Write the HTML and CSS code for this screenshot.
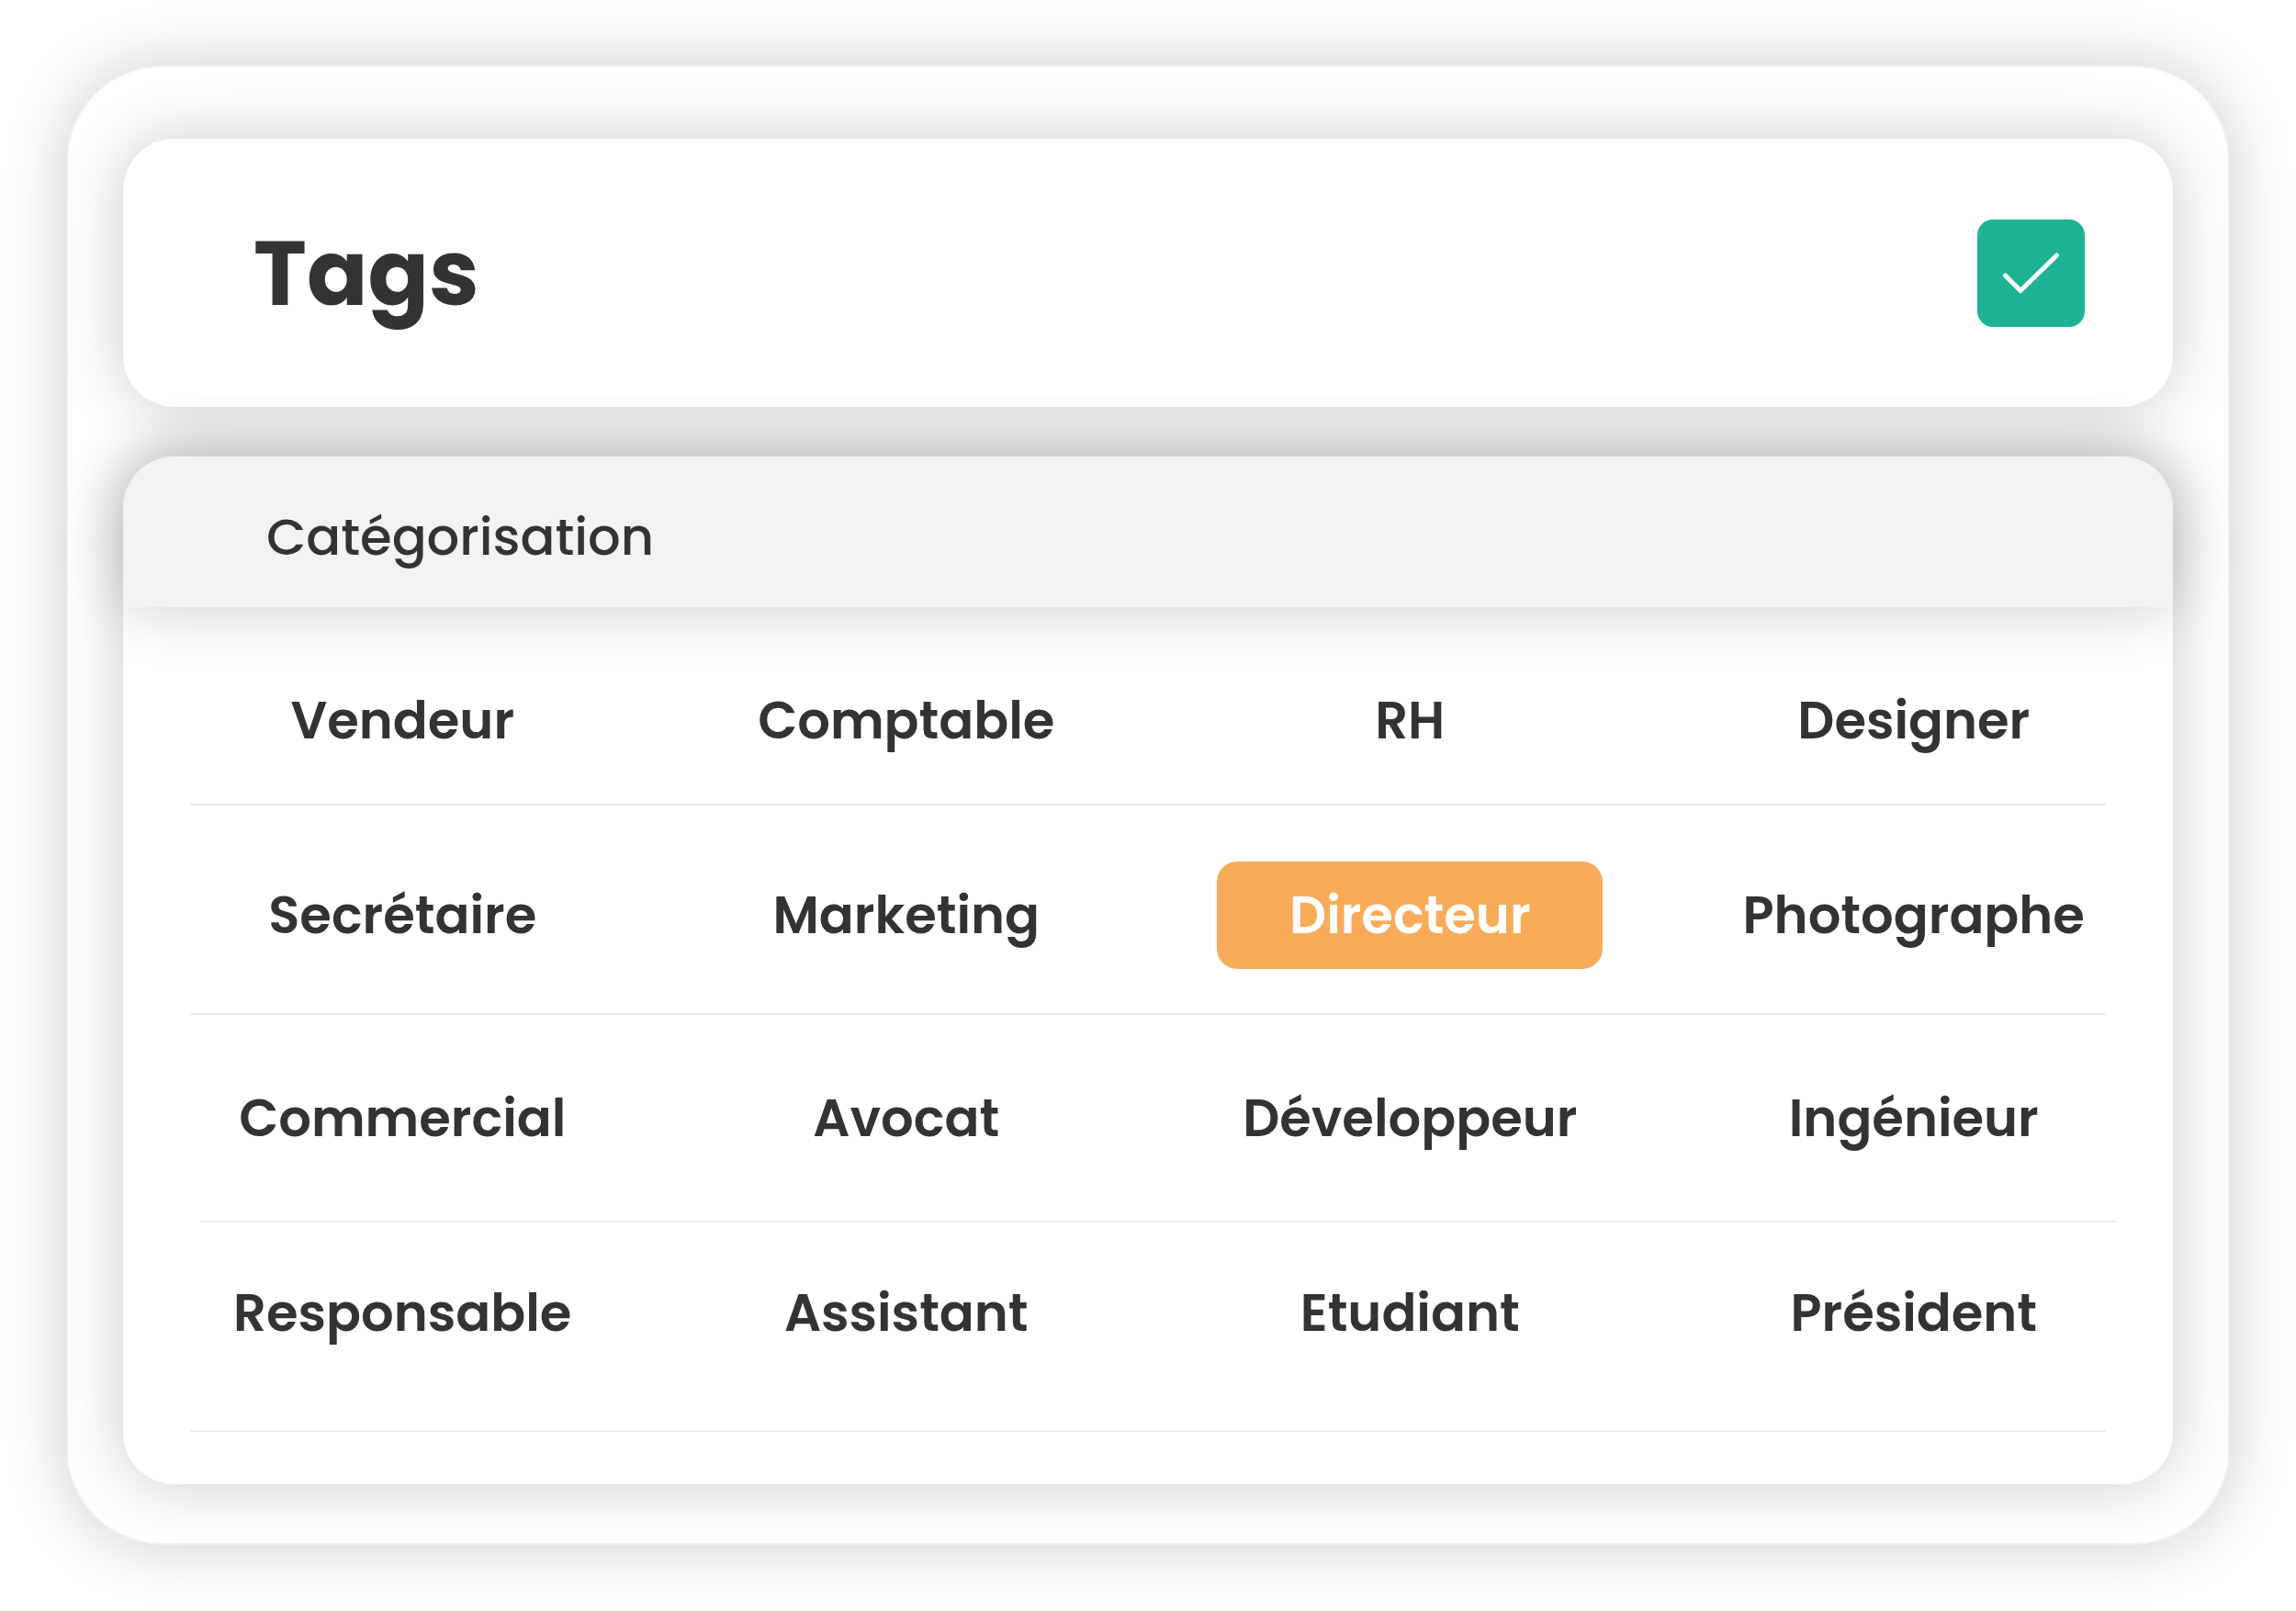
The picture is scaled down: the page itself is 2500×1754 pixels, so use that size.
FILE: index.html
```html
<!DOCTYPE html>
<html lang="fr">
<head>
    <meta charset="UTF-8">
    <title>Tags</title>
    <link rel="stylesheet" href="styles.css">
</head>
<body>

<main class="window">
    <header class="card">
        <h1>Tags</h1>
        <button class="confirm" type="button" aria-label="Valider">
            <svg viewBox="0 0 117 117" aria-hidden="true">
                <path d="M30.5 61L47 77.5L86.5 39"/>
            </svg>
        </button>
    </header>

    <section class="panel">
        <h2>Catégorisation</h2>

        <div class="tags">
            <div class="row row-first">
                <button type="button">Vendeur</button>
                <button type="button">Comptable</button>
                <button type="button">RH</button>
                <button type="button">Designer</button>
            </div>
            <hr>
            <div class="row row-second">
                <button type="button">Secrétaire</button>
                <button type="button">Marketing</button>
                <button type="button" class="selected" aria-pressed="true">Directeur</button>
                <button type="button">Photographe</button>
            </div>
            <hr>
            <div class="row row-third">
                <button type="button">Commercial</button>
                <button type="button">Avocat</button>
                <button type="button">Développeur</button>
                <button type="button">Ingénieur</button>
            </div>
            <hr class="shifted">
            <div class="row row-last">
                <button type="button">Responsable</button>
                <button type="button">Assistant</button>
                <button type="button">Etudiant</button>
                <button type="button">Président</button>
            </div>
            <hr>
        </div>
    </section>
</main>

</body>
</html>
```
FILE: styles.css
```css
* {
    box-sizing: border-box;
}
body {
    margin: 0;
    padding: 71px 72px 72px;
    background: #fff;
    color: #333;
    font-family: Poppins, Inter, sans-serif;
    font-feature-settings: "cv11";
}
h1, h2 {
    margin: 0;
}
button {
    border: none;
    padding: 0;
    background: none;
    color: inherit;
    font: inherit;
    font-feature-settings: inherit;
    cursor: pointer;
}
.window {
    padding: 78px 60px 64px;
    border: 2px solid #f0f0f0;
    border-radius: 104px;
    background: #fff;
    box-shadow: 0 0 68px rgba(0, 0, 0, 0.2);
}

/* Header */
.card {
    display: flex;
    align-items: center;
    justify-content: space-between;
    height: 292px;
    padding: 0 96px 0 142px;
    border-radius: 56px;
    background: #fff;
    box-shadow: 0 0 68px rgba(0, 0, 0, 0.2);
}
h1 {
    font-size: 98px;
    font-weight: 700;
}
.confirm {
    width: 117px;
    height: 117px;
    border-radius: 17px;
    background: #1eb394;
}
.confirm svg {
    display: block;
    fill: none;
    stroke: #fff;
    stroke-width: 5;
    stroke-linecap: round;
    stroke-linejoin: round;
}

/* Tag list */
.panel {
    margin-top: 54px;
    border-radius: 56px;
    background: #fff;
    box-shadow: 0 0 68px rgba(0, 0, 0, 0.2);
}
h2 {
    display: flex;
    align-items: center;
    height: 164px;
    padding: 10px 156px 0;
    border-radius: 56px 56px 0 0;
    background: #f3f3f3;
    box-shadow: 0 0 68px rgba(0, 0, 0, 0.2);
    font-size: 56px;
    font-weight: 500;
}
.tags {
    padding-bottom: 57px;
    font-size: 56px;
    font-weight: 600;
}
.row {
    display: grid;
    grid-template-columns: repeat(4, 1fr);
    align-items: center;
    justify-items: center;
    height: 226px;
    padding: 0 8px 0 30px;
}
.row-first {
    height: 214px;
    padding-top: 32px;
}
.row-second {
    padding-top: 12px;
}
.row-third {
    height: 224px;
}
.row-last {
    padding-bottom: 30px;
}
.selected {
    width: 420px;
    height: 117px;
    border-radius: 22px;
    background: #f8ac59;
    color: #fff;
}
hr {
    height: 2px;
    margin: 0 73px;
    border: none;
    background: #ebebeb;
}
.shifted {
    margin: 0 61px 0 85px;
}
```
